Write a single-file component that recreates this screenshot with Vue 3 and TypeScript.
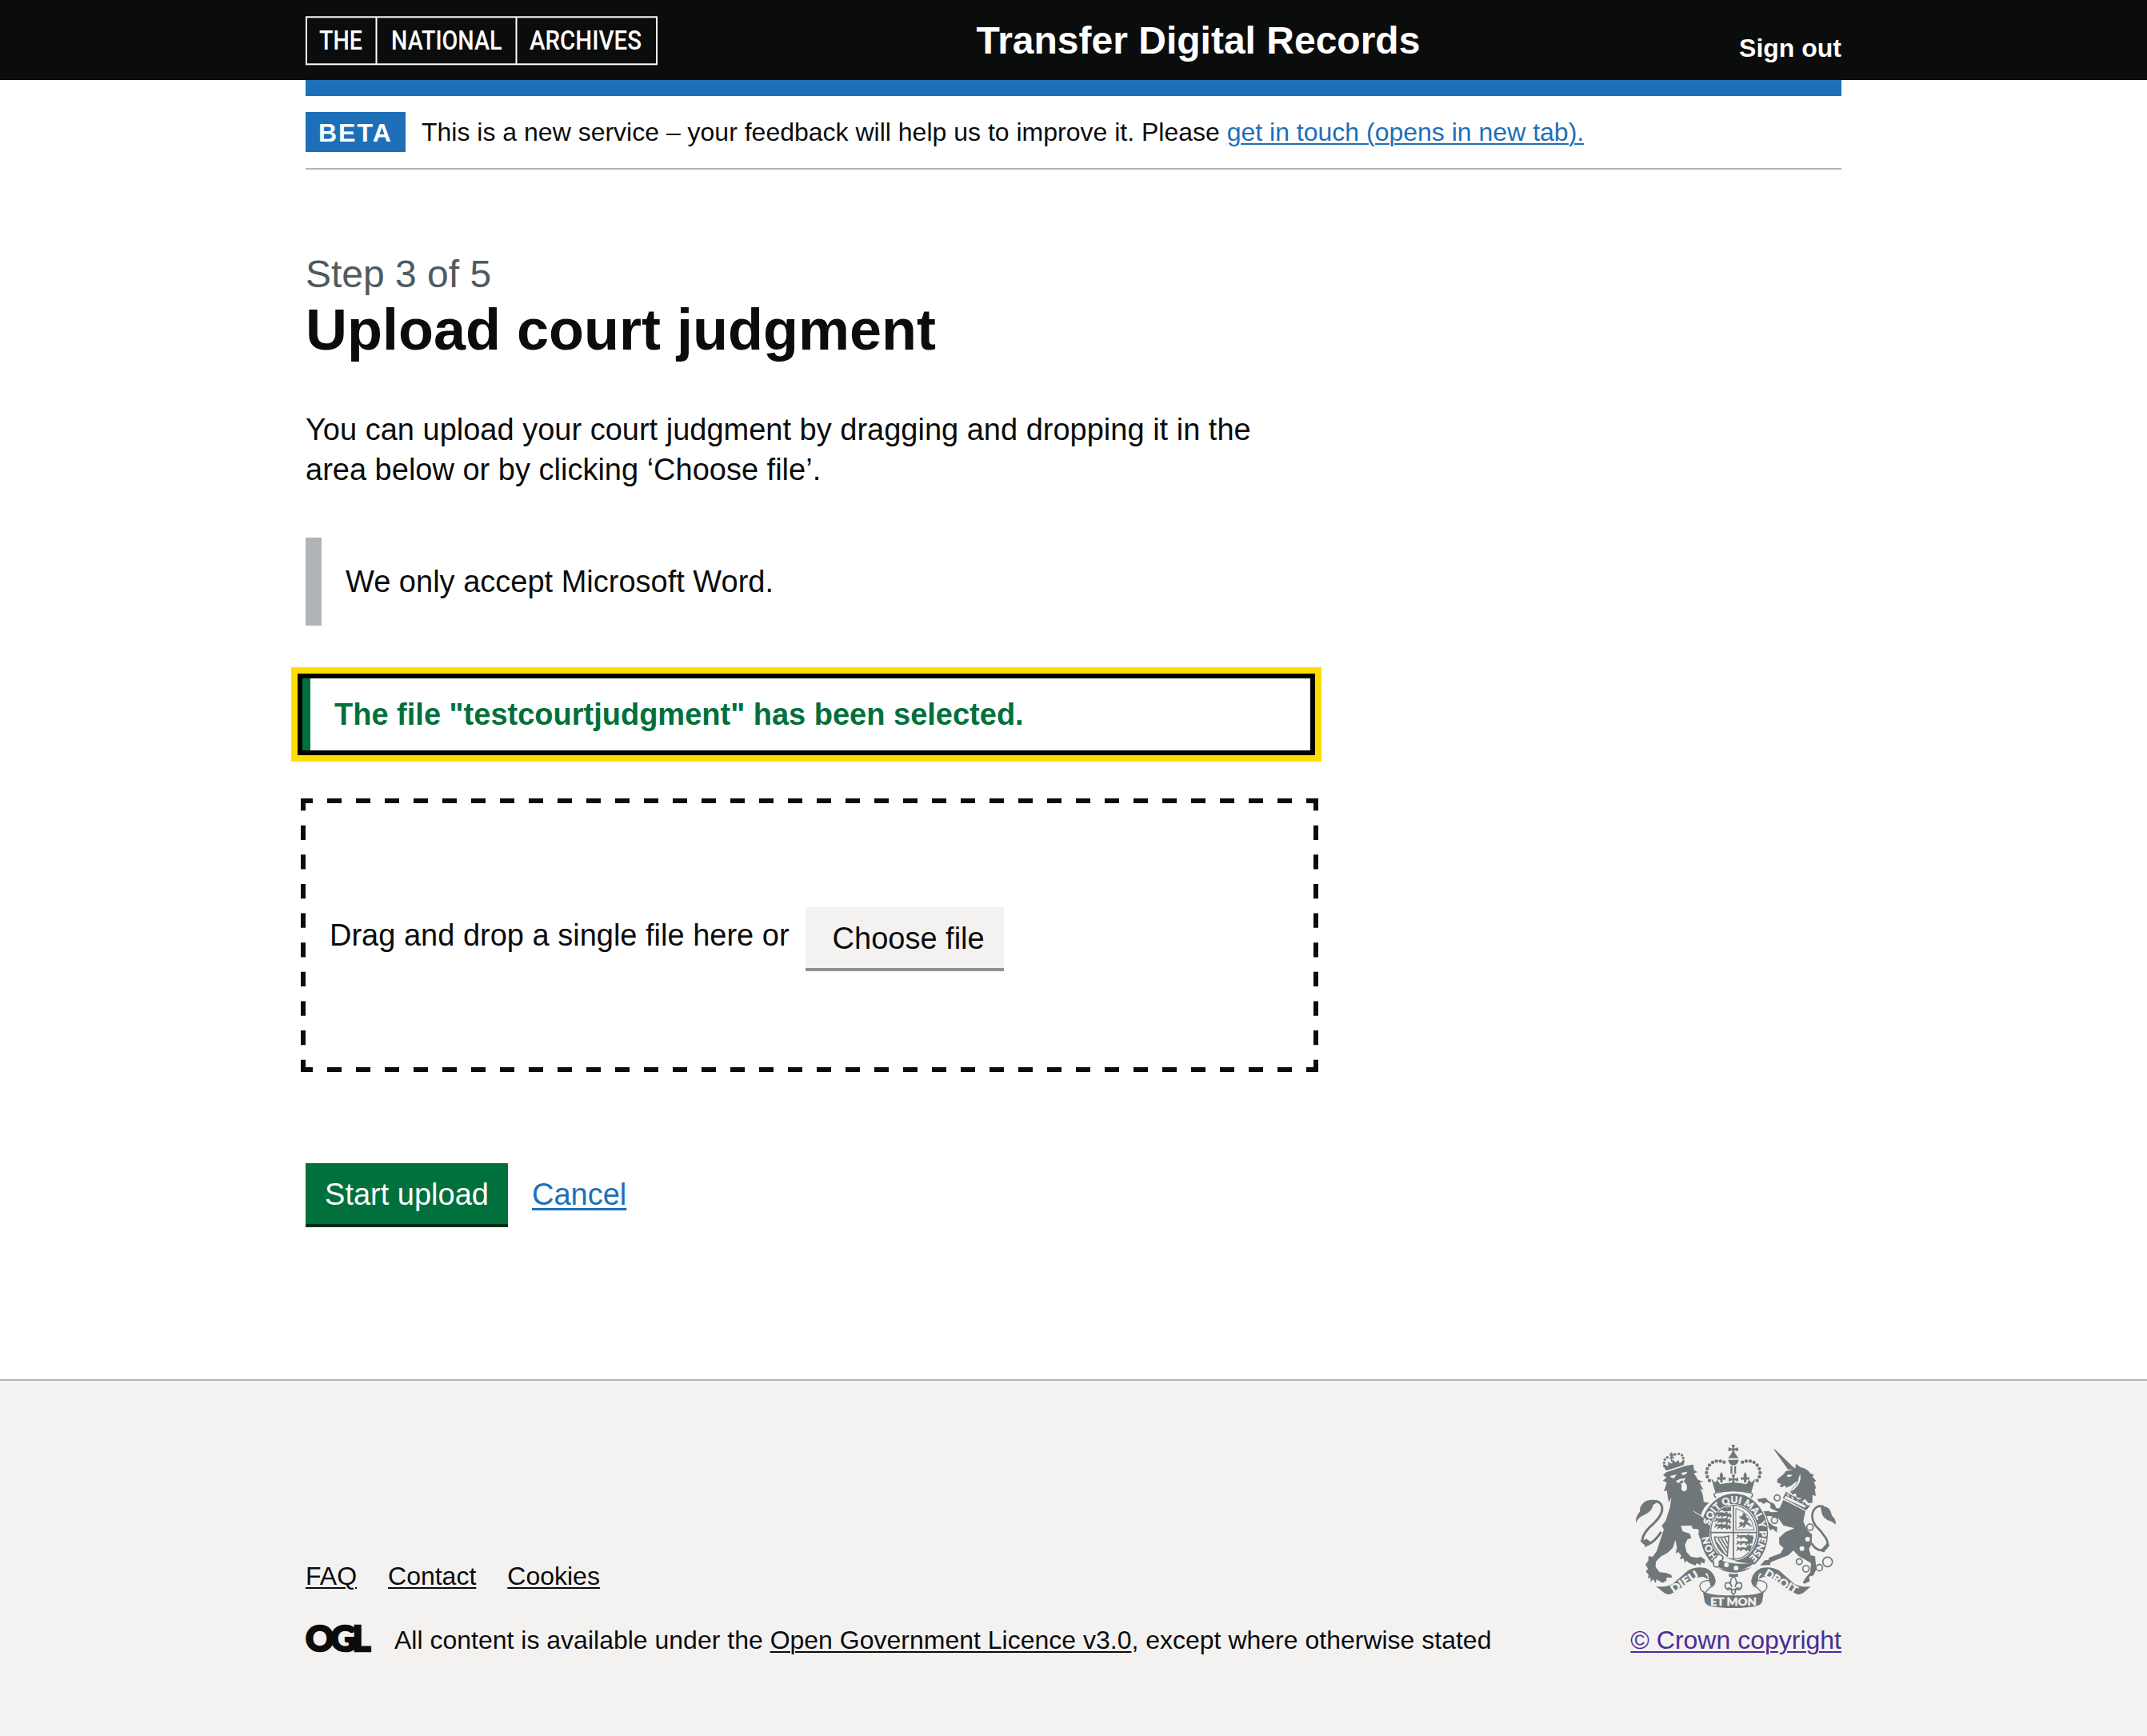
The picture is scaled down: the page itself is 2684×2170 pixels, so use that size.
<script setup lang="ts">
interface Bead { x: number; y: number }

const footerLinks: string[] = ['FAQ', 'Contact', 'Cookies']

const leftBeads: Bead[] = [
  { x: 376, y: 113 }, { x: 362, y: 109 }, { x: 347, y: 109 }, { x: 333, y: 114 },
  { x: 321, y: 124 }, { x: 313, y: 138 }, { x: 310, y: 153 }, { x: 313, y: 168 }, { x: 321, y: 182 },
]
const beads: Bead[] = [...leftBeads, ...leftBeads.map((b) => ({ x: 821 - b.x, y: b.y }))]

const lionBeads: Bead[] = [
  { x: 152, y: 128 }, { x: 151, y: 115 }, { x: 154, y: 103 }, { x: 163, y: 95 },
  { x: 192, y: 84 }, { x: 206, y: 82 }, { x: 218, y: 87 }, { x: 223, y: 98 }, { x: 223, y: 110 },
]
const rings = [
  { x: 575, y: 247, r: 11 }, { x: 565, y: 331, r: 12 }, { x: 698, y: 357, r: 12 },
  { x: 658, y: 486, r: 11 }, { x: 683, y: 513, r: 12 }, { x: 733, y: 509, r: 12 }, { x: 764, y: 487, r: 18 },
]
const quarterMarks: Bead[] = [
  { x: 342, y: 308 }, { x: 342, y: 330 }, { x: 342, y: 352 },
  { x: 424, y: 393 }, { x: 424, y: 416 }, { x: 424, y: 439 },
]
</script>

<template>
  <div class="page">
    <header class="header">
      <div class="container header-inner">
        <svg class="tna" width="440" height="62" viewBox="0 0 440 62" aria-label="The National Archives">
          <g fill="none" stroke="#fff" stroke-width="2">
            <rect x="1" y="1.3" width="438" height="59" />
            <path d="M88.5 1v60M263.5 1v60" />
          </g>
          <text x="17" y="42.200" textLength="54" lengthAdjust="spacingAndGlyphs">THE</text>
          <text x="107" y="42.200" textLength="138.500" lengthAdjust="spacingAndGlyphs">NATIONAL</text>
          <text x="280" y="42.200" textLength="140" lengthAdjust="spacingAndGlyphs">ARCHIVES</text>
        </svg>
        <div class="service">Transfer Digital Records</div>
        <a class="signout">Sign out</a>
      </div>
    </header>

    <div class="container">
      <div class="bluebar"></div>
      <div class="phase">
        <strong class="tag">BETA</strong>
        <span>This is a new service – your feedback will help us to improve it. Please <a class="link">get in touch (opens in new tab).</a></span>
      </div>

      <main class="main">
        <div class="caption">Step 3 of 5</div>
        <h1>Upload court judgment</h1>
        <p class="body">You can upload your court judgment by dragging and dropping it in the area below or by clicking ‘Choose file’.</p>
        <div class="inset">We only accept Microsoft Word.</div>
        <div class="alert"><p>The file "testcourtjudgment" has been selected.</p></div>
        <div class="dropzone">
          <svg class="dashes" width="1272" height="342" viewBox="0 0 1272 342">
            <g fill="none" stroke="#0b0c0c" stroke-width="6">
              <path d="M-3 3H1275M-3 339H1275" stroke-dasharray="18 18" />
              <path d="M3 -3V345M1269 -3V345" stroke-dasharray="18.316 18.316" />
            </g>
          </svg>
          <span>Drag and drop a single file here or</span>
          <span class="choose">Choose file</span>
        </div>
        <div class="actions">
          <button class="start" type="button">Start upload</button>
          <a class="link">Cancel</a>
        </div>
      </main>
    </div>

    <footer class="footer">
      <div class="container footer-inner">
        <div>
          <nav class="footer-nav"><a v-for="l in footerLinks" :key="l">{{ l }}</a></nav>
          <div class="licence">
            <svg class="ogl" width="83" height="36" viewBox="0 0 83 36">
              <text x="0" y="33.500" textLength="81.500">OGL</text>
            </svg>
            <span>All content is available under the <a>Open Government Licence v3.0</a>, except where otherwise stated</span>
          </div>
        </div>
        <div class="crown">
          <svg class="crest" width="250" height="204" viewBox="45 48 750 612">
            <defs>
              <path id="garter" d="M414 491A95 112 0 0 1 414 267A95 112 0 0 1 414 491" />
              <path id="cross-pattee" d="M-7 -18H7Q3 -8 3 -3Q8 -3 18 -8V8Q8 3 3 3Q3 8 8 18H-8Q-3 8 -3 3Q-8 3 -18 8V-8Q-8 -3 -3 -3Q-3 -8 -7 -18Z" />
              <path id="fleur" d="M0 -20Q10 -8 4 4Q8 -5 16 1Q18 8 12 12Q11 5 5 10L4 20H-4L-5 10Q-11 5 -12 12Q-18 8 -16 1Q-8 -5 -4 4Q-10 -8 0 -20Z" />
              <path id="passant" d="M-9 -6L-4 -9L1 -5L14 -7L30 -5L34 -10L40 -8L38 -3L44 2L39 4L42 9L35 7L33 2L28 9L22 6L25 2L12 2L8 9L2 6L6 1L-3 3L-8 8L-11 3L-5 -1Z" />
            </defs>

            <!-- lion -->
            <path d="M159 151L232 127L260 122L263 142L276 151L262 155Q270 163 278 179L299 187L284 189Q288 200 299 217L287 213Q299 236 299 262L319 266Q297 283 289 311L322 350L321 400L311 384L306 401L297 388L286 402L280 382L285 371L274 363L259 364L253 351L214 352L220 372L248 382L253 398L239 402L229 423L235 450L251 467L273 472L289 468L305 480L302 493L289 489L287 500L274 491L268 501L242 490L236 482L229 491L224 474L210 477L215 463L204 450L194 455L199 433L193 405L184 434L164 453L138 467L120 487L119 506L134 526L158 528L178 536L181 546L160 546L160 557L145 566L122 552L120 567L109 552L100 563L101 546L90 549L93 536L82 522L91 514L81 497L92 482L92 466L108 468L123 447L139 398L150 365L142 352L157 332L173 282L178 246L168 264L161 219L150 223L161 190L146 182L160 171L147 161Z" />
            <path d="M140 374Q118 410 90 421Q62 420 73 390Q85 365 110 345Q155 302 140 272Q127 255 104 263" fill="none" stroke="#6f777b" stroke-width="9" />
            <path d="M130 257Q92 248 73 266Q57 282 61 298Q43 318 45 341Q55 318 79 310Q105 299 110 274L127 262ZM84 400Q73 411 61 405Q65 418 79 419L78 433L91 426L107 417Z" />
            <path d="M154 139L147 119L166 128L166 112L181 119L182 103L194 114L205 105L209 117L227 106L224 126L160 145Z" />
            <path d="M171 82L188 99M188 82L172 99M179 76V112" fill="none" stroke="#6f777b" stroke-width="5" />
            <path d="M158 148L230 123" fill="none" stroke="#f3f2f1" stroke-width="3" />
            <circle v-for="(b, i) in lionBeads" :key="'l' + i" :cx="b.x" :cy="b.y" r="5" />
            <path class="cut" d="M173 165L198 159L188 174Q179 175 173 165ZM215 153L238 149Q235 160 221 162ZM196 183L210 176L233 173L224 184L235 197Q242 220 225 223Q212 219 217 202L211 190L201 191Z" />
            <path d="M207 188L220 180L223 189L216 194Z" />

            <!-- unicorn -->
            <path d="M561 63L567 65L636 132L643 137L645 119L661 131Q688 136 700 156L712 160L708 168L721 184L713 188L721 211L716 214L720 240L708 236L707 266L691 266L680 251L665 263L663 247L648 246L645 230L632 235L622 220L644 197L650 183L629 200L609 209L604 200L592 208L583 202L592 196L575 190L576 177L600 157L608 146L636 141L615 140Z" />
            <path class="cut" d="M610 164Q621 156 632 163Q625 169 616 169ZM661 157Q670 190 635 218L611 227Q655 201 656 171Z" />
            <path d="M607 225L696 281M599 246L682 291" fill="none" stroke="#6f777b" stroke-width="4" />
            <path d="M608 226L616 244L622 232L634 253L642 239L654 262L660 248L671 271L678 260L684 279L700 272L685 293L596 247Z" />
            <path class="cut" d="M607 239L682 277L679 284L602 248Z" />
            <path d="M598 254L681 296L673 335L688 369L706 384L704 421L694 438L701 463L717 466L722 514L711 538L695 542L697 560L677 569L671 564L684 544L699 526L702 492L681 479L656 466L636 444L617 462L569 481L550 489L549 499L511 500L529 481L542 480L545 471L587 455L599 435L583 421L582 397L606 375L640 361L598 350L580 324L549 315L536 315L543 337L558 350L576 358L573 377L559 363L550 369L541 356L528 349L519 316L507 310L519 298L542 296L552 301L579 300L550 286L549 269L536 263L523 270L516 263L505 262L501 251L532 247L545 261L564 269L572 286L584 286Z" />
            <path d="M704 417Q721 447 749 443Q774 432 758 398Q741 371 718 350Q698 319 712 293Q726 272 749 280" fill="none" stroke="#6f777b" stroke-width="8" />
            <path d="M732 276Q766 277 774 294L781 315Q797 327 794 347L780 336Q746 327 742 303L738 281ZM740 440Q739 453 753 450L756 437L772 426L765 413Z" />
            <g fill="none" stroke="#6f777b" stroke-width="5">
              <circle v-for="(r, i) in rings" :key="'r' + i" :cx="r.x" :cy="r.y" :r="r.r" />
            </g>
            <circle class="cut" cx="689" cy="402" r="9" />
            <circle class="cut" cx="668" cy="437" r="9" />

            <!-- royal crown -->
            <use href="#cross-pattee" x="410.500" y="65" />
            <path d="M404 80H417L430 98H391ZM391 104H431Q427 124 410 125Q395 124 391 104ZM400 128H407V156H400ZM414 128H421V156H414Z" />
            <circle v-for="(b, i) in beads" :key="'b' + i" :cx="b.x" :cy="b.y" r="6.500" />
            <use href="#cross-pattee" x="411" y="178" />
            <use href="#fleur" x="366" y="170" />
            <use href="#fleur" x="455" y="170" />
            <path d="M328 174L342 190L351 180L361 196Q410 183 460 196L470 180L479 190L493 174L478 226Q410 211 343 226Z" />
            <path d="M346 246Q331 234 345 228Q410 212 476 228Q490 234 475 248" fill="none" stroke="#6f777b" stroke-width="5" />

            <!-- garter and shield -->
            <ellipse cx="413.500" cy="379" rx="131" ry="151" class="cut" />
            <ellipse cx="413.500" cy="379" rx="127" ry="148" />
            <ellipse cx="412" cy="376" rx="91" ry="106" class="cut" />
            <path d="M289 311L323 354L321 402L313 386L307 401L297 388L286 402L280 382Z" />
            <path d="M262 297L298 320L322 350" fill="none" stroke="#f3f2f1" stroke-width="3" />
            <ellipse cx="412" cy="376" rx="86" ry="101" fill="none" stroke="#6f777b" stroke-width="4" />
            <path d="M411 274V480M324 377H500" fill="none" stroke="#6f777b" stroke-width="5" />
            <path d="M420 286V367H489Q481 306 420 286Z" fill="none" stroke="#6f777b" stroke-width="3" />
            <path d="M362 289L402 280V296L376 298ZM458 391L482 387L489 400L462 402Z" />
            <use v-for="(q, i) in quarterMarks" :key="'q' + i" href="#passant" :x="q.x + 8" :y="q.y" />
            <use v-for="(q, i) in quarterMarks.slice(0, 3)" :key="'p' + i" href="#passant" :x="q.x + (i < 1 ? 20 : 18)" :y="q.y + 5" />
            <path d="M427 360L437 349L431 342L441 336L447 342L452 331L438 326L431 315L440 317L448 307L442 300L456 307L461 320L470 328L463 337L474 345L482 358L471 351L459 345L453 357L446 361L449 351Z" />
            <path d="M339 393Q368 398 394 390L388 465Q349 443 339 393M353 399L386 452M365 399L390 439M378 397L391 421M348 413L375 454" fill="none" stroke="#6f777b" stroke-width="5" />
            <path d="M463 398L486 396L481 419L466 415ZM461 425L481 425L472 444L461 440Z" />
            <g class="motto">
              <text><textPath href="#garter" startOffset="109" text-anchor="middle">HON</textPath></text>
              <text><textPath href="#garter" startOffset="233" text-anchor="middle">SOIT</textPath></text>
              <text><textPath href="#garter" startOffset="316" text-anchor="middle">QUI</textPath></text>
              <text><textPath href="#garter" startOffset="398" text-anchor="middle">MAL</textPath></text>
              <text><textPath href="#garter" startOffset="458" text-anchor="middle">Y</textPath></text>
              <text><textPath href="#garter" startOffset="535" text-anchor="middle" textLength="112" lengthAdjust="spacingAndGlyphs">PENSE</textPath></text>
            </g>
            <path class="cut" d="M334 470L365 452L381 469Q429 496 479 491L494 501Q425 530 351 510L332 495Z" />
            <path d="M359 479Q416 502 492 490Q430 540 354 507Z" />
            <path d="M369 464Q346 453 346 471Q328 475 337 489Q333 509 353 506Q365 499 357 488Q379 477 369 464Z" fill="none" stroke="#6f777b" stroke-width="5" />
            <circle class="cut" cx="385" cy="498" r="9" />
            <circle class="cut" cx="421" cy="510" r="9" />

            <!-- ribbon -->
            <path d="M121 579Q160 583 184 569Q213 544 241 519Q269 502 307 510Q340 526 344 555Q343 573 325 580Q323 550 298 543Q271 542 236 568Q202 596 173 609Q158 609 146 599ZM701 579Q663 583 639 569Q610 544 582 519Q553 502 515 510Q482 526 478 555Q479 573 497 580Q499 550 524 543Q551 542 586 568Q620 596 651 609Q666 609 678 599Z" />
            <path class="cut" d="M312 529Q325 549 313 561L302 565Q326 545 304 533ZM510 529Q497 549 509 561L520 565Q496 545 518 533Z" />
            <path d="M323 556Q287 557 285 576Q285 596 306 604M342 557Q342 577 322 584L307 600M499 556Q535 557 537 576Q537 596 516 604M480 557Q480 577 500 584L515 600" fill="none" stroke="#6f777b" stroke-width="4" />
            <path d="M296 595Q313 610 352 611Q410 615 469 611Q509 610 525 595L519 636Q514 650 490 655Q410 666 331 655Q308 650 303 636Z" />
            <g class="motto ribbon">
              <text transform="translate(186 605) rotate(-33)" textLength="116" lengthAdjust="spacingAndGlyphs">DIEU</text>
              <text x="324" y="651" textLength="174" lengthAdjust="spacingAndGlyphs">ET MON</text>
              <text transform="translate(524 538) rotate(31)" textLength="137" lengthAdjust="spacingAndGlyphs">DROIT</text>
            </g>
            <path d="M394 530Q411 535 428 530V543H394Z" />
            <path d="M411 540Q430 560 417 581Q421 560 440 567Q447 581 433 591Q430 578 417 590L418 602L411 609L404 602L405 590Q392 578 389 591Q375 581 382 567Q401 560 405 581Q392 560 411 540ZM387 591H435" fill="none" stroke="#6f777b" stroke-width="5" />
          </svg>
          <a class="copyright">© Crown copyright</a>
        </div>
      </div>
    </footer>
  </div>
</template>

<style>
body { margin: 0; background: #fff; }
</style>

<style scoped>
.page {
  font-family: "Liberation Sans", Arial, sans-serif;
  color: #0b0c0c;
  min-height: 2170px;
  display: flex;
  flex-direction: column;
  font-size: 38px;
  line-height: 50px;
}
.container { width: 1920px; margin: 0 auto; }
.header { background: #0b0c0c; color: #fff; height: 100px; }
.header-inner { display: flex; height: 100px; align-items: flex-start; }
.tna { margin-top: 20px; flex: none; }
.tna text { font-family: Roboto, sans-serif; font-weight: 500; font-size: 34px; fill: #fff; }
.service { font-size: 48px; font-weight: 700; line-height: 102px; margin-left: 398.5px; white-space: nowrap; }
.signout { font-size: 32px; font-weight: 700; line-height: 40px; margin: 40px 0 0 auto; }
.bluebar { height: 20px; background: #1d70b8; }
.phase {
  display: flex;
  align-items: center;
  padding: 20px 0;
  border-bottom: 2px solid #b1b4b6;
  font-size: 32px;
}
.tag {
  background: #1d70b8;
  color: #fff;
  height: 50px;
  line-height: 52px;
  width: 125px;
  box-sizing: border-box;
  padding-left: 16px;
  letter-spacing: 2px;
  margin-right: 20px;
}
.link { color: #1d70b8; text-decoration: underline; text-decoration-thickness: 2px; text-underline-offset: 3.2px; }
.main { padding-top: 101px; width: 1260px; }
.caption { font-size: 48px; line-height: 60px; color: #505a5f; }
h1 { margin: 0 0 60px; font-size: 72px; line-height: 79px; font-weight: 700; }
.body { margin: 0; }
.inset { margin-top: 60px; border-left: 20px solid #b1b4b6; padding: 30px; }
.alert {
  margin: 60px 0 0 -10px;
  width: 1272px;
  box-sizing: border-box;
  height: 102px;
  border: 6px solid #000;
  box-shadow: 0 0 0 8px #fd0;
}
.alert p { margin: 0; height: 90px; line-height: 90px; box-sizing: border-box; border-left: 10px solid #00703c; padding-left: 30px; font-weight: 700; color: #00703c; }
.dropzone { position: relative; margin: 54px 0 0 -6px; width: 1272px; height: 342px; box-sizing: border-box; padding-left: 36px; display: flex; align-items: center; }
.dashes { position: absolute; left: 0; top: 0; overflow: hidden; }
.choose { box-sizing: border-box; width: 248px; height: 80px; margin: 10px 0 0 20px; padding-left: 34px; line-height: 78px; background: #f3f2f1; border-bottom: 4px solid #929191; }
.actions { display: flex; margin-top: 114px; height: 80px; line-height: 78px; gap: 30px; }
.actions .link { text-decoration-thickness: 3px; text-underline-offset: 4px; }
.start { font: inherit; line-height: 78px; color: #fff; background: #00703c; border: 0; border-bottom: 4px solid #002d18; width: 253px; height: 80px; padding: 0; text-align: center; }
.footer { margin-top: 190px; flex: 1; background: #f3f2f1; border-top: 2px solid #b1b4b6; font-size: 32px; line-height: 40px; }
.footer a { text-decoration: underline; text-decoration-thickness: 2px; text-underline-offset: 3.2px; }
.footer-inner { display: flex; justify-content: space-between; align-items: flex-end; padding-top: 80px; }
.footer-nav { display: flex; gap: 39px; margin-bottom: 40px; }
.licence { display: flex; }
.ogl { margin-right: 28px; overflow: visible; flex: none; }
.ogl text { font-family: Lato, sans-serif; font-weight: 900; font-size: 44px; fill: #0b0c0c; stroke: #0b0c0c; stroke-width: 2.5px; }
.crown { display: flex; flex-direction: column; align-items: flex-end; }
.crest { margin: 0 7px 20px 0; fill: #6f777b; }
.cut { fill: #f3f2f1; }
.motto text { font-family: Lato, sans-serif; font-weight: 900; font-size: 36px; fill: #f3f2f1; stroke: #f3f2f1; stroke-width: 1px; }
.motto.ribbon text { font-size: 41px; }
.crown .copyright { color: #4c2c92; }
</style>
